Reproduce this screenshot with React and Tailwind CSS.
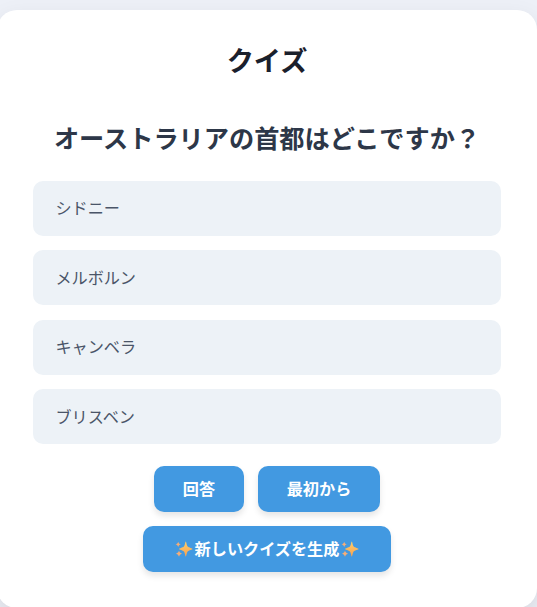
const OPTIONS = ['シドニー', 'メルボルン', 'キャンベラ', 'ブリスベン'];

function Sparkles({ className }) {
  return (
    <svg viewBox="0 0 18 18" className={`h-[18px] w-[18px] shrink-0 ${className}`} aria-hidden="true">
      <defs>
        <linearGradient id="spark" x1="0" y1="0" x2="0" y2="1">
          <stop offset="0" stopColor="#fdd06c" />
          <stop offset="1" stopColor="#f9a04f" />
        </linearGradient>
      </defs>
      <path
        fill="url(#spark)"
        d="M10.8 1.4C11.3 1.4 11.6 5.2 12.7 6.6C13.9 7.7 17.6 8.4 17.6 9C17.6 9.6 13.9 10.3 12.7 11.4C11.6 12.8 11.3 16.6 10.8 16.6C10.3 16.6 10 12.8 8.9 11.4C7.7 10.3 4 9.6 4 9C4 8.4 7.7 7.7 8.9 6.6C10 5.2 10.3 1.4 10.8 1.4Z"
      />
      <g fill="#f5ad78">
        <path d="M3.2 1.8C3.7 3.4 4.2 4 5.8 4.4C4.2 4.8 3.7 5.4 3.2 7C2.7 5.4 2.2 4.8 .6 4.4C2.2 4 2.7 3.4 3.2 1.8Z" />
        <path d="M4 10.6C4.6 12.4 5.1 13.1 7 13.7C5.1 14.3 4.6 15 4 16.8C3.4 15 2.9 14.3 1 13.7C2.9 13.1 3.4 12.4 4 10.6Z" />
      </g>
    </svg>
  );
}

function Button({ className, children }) {
  return (
    <button
      className={`flex h-[46px] shrink-0 items-center justify-center rounded-[10px] bg-[#4299e1] pb-[2px] text-[16.15px] font-bold whitespace-nowrap text-white shadow-[0_4px_6px_rgba(0,0,0,0.1)] ${className}`}
    >
      {children}
    </button>
  );
}

export default function App() {
  return (
    <div className="h-[607px] overflow-hidden bg-[#edf0f7] pt-[10px] font-['Noto_Sans_CJK_JP',sans-serif]">
      <main className="-ml-[3px] h-[598px] w-[540px] rounded-[20px] bg-white px-9 pt-[29px] shadow-[0_10px_25px_rgba(0,0,0,0.1)]">
        <h1 className="text-center text-[27.2px] leading-10 font-bold text-[#1a202c]">クイズ</h1>
        <h2 className="mt-[38px] text-center text-[25.2px] leading-10 font-bold whitespace-nowrap text-[#2d3748]">
          オーストラリアの首都はどこですか？
        </h2>
        <ul className="mt-[24px] flex flex-col gap-[14.4px]">
          {OPTIONS.map((option) => (
            <li
              key={option}
              className="flex h-[55px] items-center rounded-[10px] bg-[#edf2f7] px-[22.4px] pb-[2.1px] text-[16.15px] text-[#4a5568]"
            >
              {option}
            </li>
          ))}
        </ul>
        <div className="mt-[22px] flex flex-wrap justify-center gap-[14px]">
          <Button className="w-[90px]">回答</Button>
          <Button className="w-[122px]">最初から</Button>
          <Button className="w-[248px]">
            <Sparkles className="mt-[2px] mr-[2px]" />
            <span>新しいクイズを生成</span>
            <Sparkles className="mt-[2px] ml-[2px]" />
          </Button>
        </div>
      </main>
    </div>
  );
}
